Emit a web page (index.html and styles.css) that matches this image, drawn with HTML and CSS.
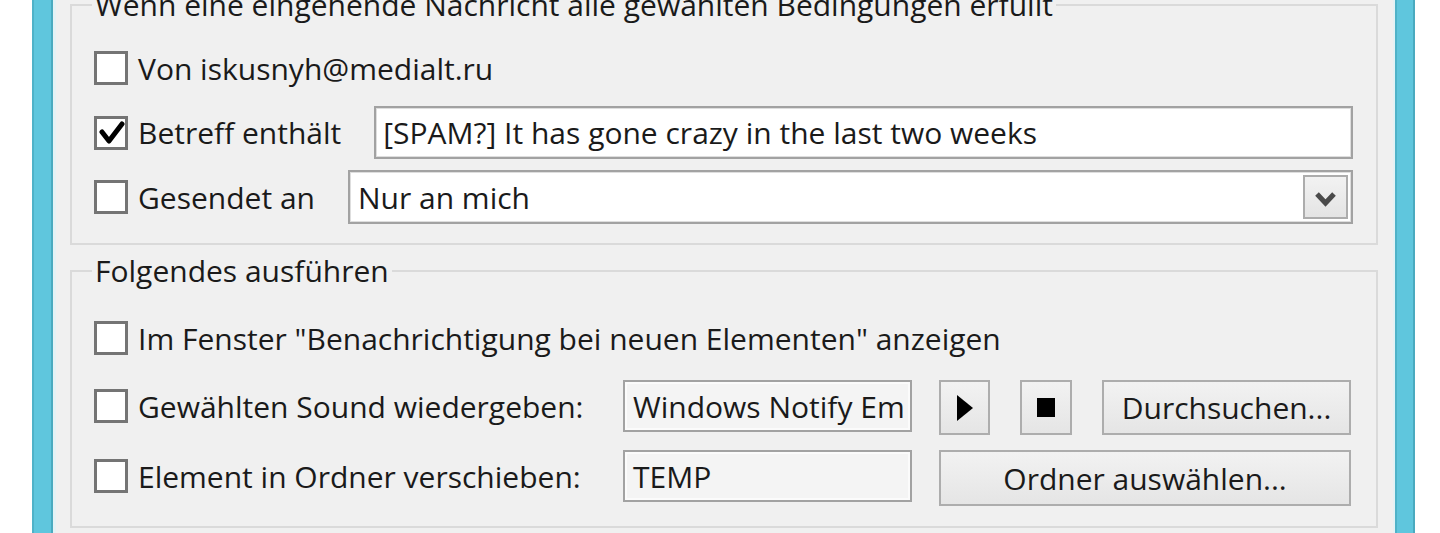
FILE: index.html
```html
<!DOCTYPE html>
<html lang="de">
<head>
<meta charset="utf-8">
<title>Regel erstellen</title>
<link rel="stylesheet" href="styles.css">
</head>
<body>
<div class="screen">
  <div class="gutter-l"></div>
  <div class="bar"></div>
  <div class="edge"></div>
  <div class="dialog">
    <div class="group g1">
      <span class="legend">Wenn eine eingehende Nachricht alle gewählten Bedingungen erfüllt</span>
      <div class="row">
        <label class="check"><span class="box"></span>Von iskusnyh@medialt.ru</label>
      </div>
      <div class="row">
        <label class="check"><span class="box"><svg class="tick" width="28" height="28" viewBox="0 0 28 28"><polyline points="5,13 12,22 25,5" fill="none" stroke="#000" stroke-width="5" stroke-linecap="round" stroke-linejoin="round"/></svg></span>Betreff enthält</label>
        <div class="field text">[SPAM?] It has gone crazy in the last two weeks</div>
      </div>
      <div class="row">
        <label class="check"><span class="box"></span>Gesendet an</label>
        <div class="field select">
          <span class="value">Nur an mich</span>
          <span class="drop"><svg width="41" height="40" viewBox="0 0 41 40"><polyline points="12,17 20.5,26 29,17" fill="none" stroke="#4a4a4a" stroke-width="5"/></svg></span>
        </div>
      </div>
    </div>
    <div class="group g2">
      <span class="legend">Folgendes ausführen</span>
      <label class="check wide"><span class="box"></span>Im Fenster "Benachrichtigung bei neuen Elementen" anzeigen</label>

      <label class="check cell"><span class="box"></span>Gewählten Sound wiedergeben:</label>
      <div class="field ro"><span class="clip">Windows Notify Email</span></div>
      <div class="controls">
        <div class="btn icon"><svg width="16" height="26" viewBox="0 0 16 26"><polygon points="0,0 16,13 0,26" fill="#000"/></svg></div>
        <div class="btn icon stop"><svg width="18" height="19" viewBox="0 0 18 19"><rect width="18" height="19" fill="#000"/></svg></div>
        <div class="btn grow">Durchsuchen...</div>
      </div>

      <label class="check cell"><span class="box"></span>Element in Ordner verschieben:</label>
      <div class="field ro">TEMP</div>
      <div class="btn tall">Ordner auswählen...</div>
    </div>
  </div>
  <div class="edge r"></div>
  <div class="bar r"></div>
  <div class="gutter-r"></div>
</div>
</body>
</html>
```

FILE: styles.css
```css
body {
  margin: 0;
  font-family: "Open Sans", "Noto Sans", sans-serif;
  font-size: 30px;
  color: #1a1a1a;
}

.screen {
  display: flex;
  width: 1440px;
  height: 533px;
  overflow: hidden;
  background: #fff;
}

.gutter-l { width: 32px; flex: none; }
.gutter-r { width: 25px; flex: none; }

.bar {
  width: 21px;
  flex: none;
  background: #5fc6dd;
  box-shadow: inset 2px 0 0 #4fb2c8, inset -2px 0 0 #4aaabf;
}
.bar.r { width: 20px; }

.edge { width: 3px; flex: none; background: #e4f2f5; }
.edge.r { width: 2px; }

.dialog {
  flex: 1;
  background: #f0f0f0;
  padding: 4px 15px 0 14px;
  display: flex;
  flex-direction: column;
  gap: 25px;
}

.group {
  position: relative;
  border: 2px solid #dadada;
}

.legend {
  position: absolute;
  left: 20px;
  top: -16px;
  padding: 0 3px;
  line-height: 30px;
  background: #f0f0f0;
  white-space: nowrap;
}

.g1 {
  display: grid;
  grid-template-rows: 54px 53px 54px;
  row-gap: 11px;
  padding: 35px 23px 19px 22px;
}

.g2 {
  display: grid;
  grid-template-columns: 502px 289px 1fr;
  grid-template-rows: 54px 55px 56px;
  column-gap: 27px;
  row-gap: 15px;
  padding: 39px 25px 20px 22px;
}

.row {
  display: flex;
  align-items: center;
  gap: 33px;
}

.check {
  display: flex;
  align-items: center;
  gap: 10px;
  white-space: nowrap;
}

.check.wide { grid-column: 1 / -1; }
.check.cell { height: 52px; align-self: start; }

.box {
  width: 34px;
  height: 34px;
  flex: none;
  box-sizing: border-box;
  border: 3px solid #747474;
  background: #fff;
  display: flex;
  align-items: center;
  justify-content: center;
}

.field {
  box-sizing: border-box;
  border: 2px solid #a2a2a2;
  box-shadow: inset 0 0 0 1px #dedede;
  background: #fff;
  display: flex;
  align-items: center;
  white-space: nowrap;
  overflow: hidden;
}

.field.text {
  flex: 1;
  height: 53px;
  padding-left: 7px;
}

.field.select {
  flex: 1;
  height: 54px;
  padding: 0 3px 0 8px;
  justify-content: space-between;
}

.drop {
  width: 45px;
  height: 44px;
  box-sizing: border-box;
  border: 2px solid #acacac;
  background: linear-gradient(#f2f2f2, #e4e4e4);
  display: flex;
  align-items: center;
  justify-content: center;
}

.field.ro {
  height: 52px;
  align-self: start;
  padding: 0 5px 0 8px;
  background: #f4f4f4;
  box-shadow: inset 0 0 0 2px #fbfbfb;
}

.clip {
  display: block;
  overflow: hidden;
  white-space: nowrap;
}

.controls {
  display: flex;
  gap: 30px;
  align-self: start;
}

.btn {
  box-sizing: border-box;
  height: 55px;
  border: 2px solid #adadad;
  background: linear-gradient(#f2f2f2, #e5e5e5);
  display: flex;
  align-items: center;
  justify-content: center;
  white-space: nowrap;
}

.btn.icon { width: 51px; flex: none; }
.btn.stop { width: 52px; }
.btn.grow { flex: 1; }
.btn.tall { height: 56px; align-self: start; }
```
